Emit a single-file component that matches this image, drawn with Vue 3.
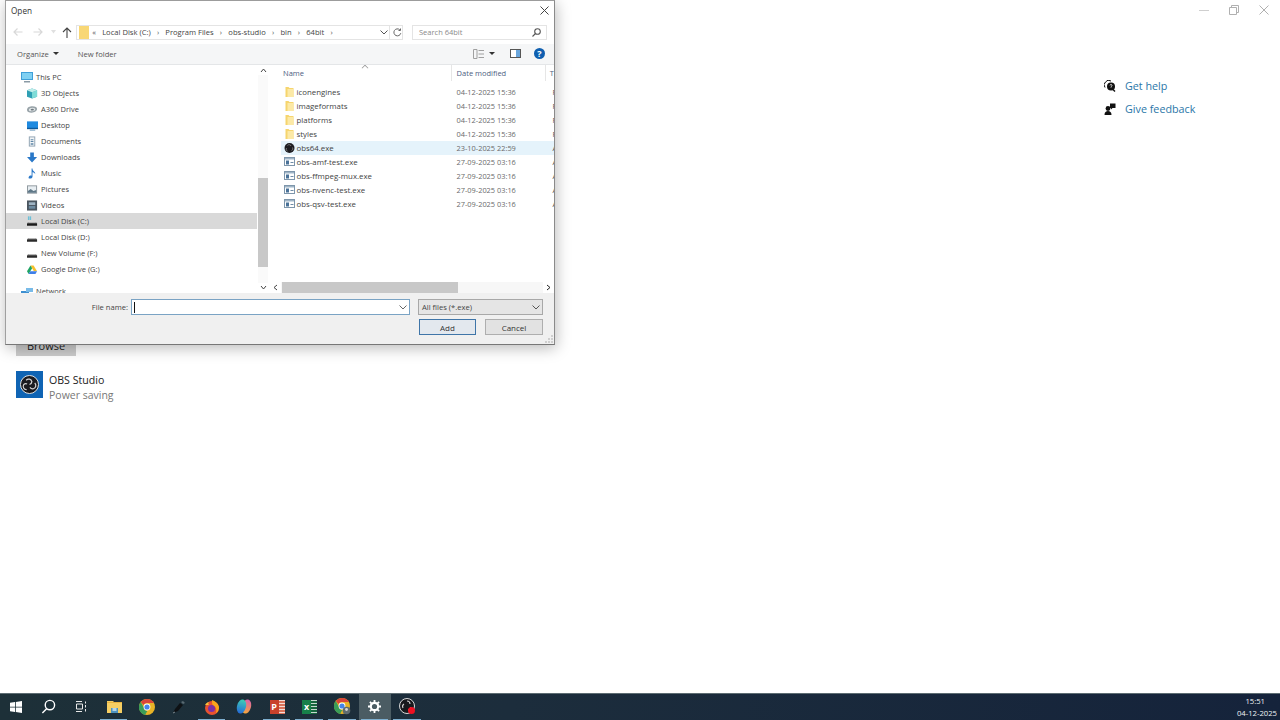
<script setup>
const treeItems = [
  { name: "This PC", icon: "pc", top: true },
  { name: "3D Objects", icon: "cube" },
  { name: "A360 Drive", icon: "drive360" },
  { name: "Desktop", icon: "desktop" },
  { name: "Documents", icon: "docs" },
  { name: "Downloads", icon: "down" },
  { name: "Music", icon: "music" },
  { name: "Pictures", icon: "pics" },
  { name: "Videos", icon: "video" },
  { name: "Local Disk (C:)", icon: "diskc", selected: true },
  { name: "Local Disk (D:)", icon: "disk" },
  { name: "New Volume (F:)", icon: "disk" },
  { name: "Google Drive (G:)", icon: "gdrive" },
  { name: "Network", icon: "network", top: true, gap: true },
];

// each icon is a list of [path, fill] drawn in a 12x11 box
const treeIcons = {
  pc: [["M0 0h12v8H0z", "#3f9fd8"], ["M1 1h10v6H1z", "#7fd0f2"], ["M3 9h6v1.500H3z", "#8a9aa5"]],
  cube: [["M5.500 0L11 2v7l-5.500 2L0 9V2z", "#2f9fb4"], ["M5.500 4L11 2v7l-5.500 2z", "#7fdcd8"], ["M5.500 0L11 2 5.500 4 0 2z", "#bfeeea"]],
  drive360: [["M0 6c0-3 3-4 6-4s5 1 5 3-3 4-6 4-5-1-5-3z", "#98a3a8"], ["M2 6c0-1.500 2-2.300 4-2.300S9 4.500 9 5.500 7 7.500 5 7.500 2 7 2 6z", "#e4e8ea"], ["M4 5.800c0-.6 1-1 2-1s1.500.4 1.500.9S6.500 6.700 5.500 6.700 4 6.300 4 5.800z", "#6e7a80"]],
  desktop: [["M0 1h12v8H0z", "#1f8ae0"], ["M0 8h12v1.500H0z", "#0d5a9c"], ["M3 10h6v1H3z", "#5a8fb8"]],
  docs: [["M2 0h7v11H2z", "#8ca0b0"], ["M3 1h5v9H3z", "#f2f5f7"], ["M4 3h3v1H4zM4 5h3v1H4zM4 7.500h3v1.500H4z", "#5f87a8"]],
  down: [["M3.500 0h4v5H11L5.500 11 0 5h3.500z", "#2a78c8"]],
  music: [["M5 0h1c0 3 3 3 3 6-1-1.500-2-2-3-2v5c0 1.500-1.500 2-3 2S1.500 10 2 9s2-1.500 3-1z", "#2a78c8"]],
  pics: [["M0 1h11v9H0z", "#8a949a"], ["M1 2h9v7H1z", "#e8eef2"], ["M1 7l3-2 3 2 3-1v3H1z", "#5f7888"]],
  video: [["M0 0h11v11H0z", "#4a5560"], ["M2 2h7v3H2z", "#9fb4c4"], ["M2 6h7v3H2z", "#6c8aa0"]],
  disk: [["M1.500 6h8l1.500 2v2H0V8z", "#2a2a2a"], ["M1.500 6h8l.8 1.500H.8z", "#b8b8b8"]],
  diskc: [["M1.500 6h8l1.500 2v2H0V8z", "#1c1c1c"], ["M1.500 6h8l.8 1.500H.8z", "#b8b8b8"], ["M1 0h1.500v1.500H1zM3 0h1.500v1.500H3zM1 2h1.500v1.500H1zM3 2h1.500v1.500H3z", "#4ab8d8"]],
  gdrive: [["M3.800 1h3.400l3.800 6.500H7.500z", "#f6c02c"], ["M3.800 1L0 7.500l1.800 3 3.800-6.500z", "#1fa463"], ["M3.500 7.500H11l-1.800 3H1.800z", "#3f7fe8"]],
  network: [["M0 5h8v5H0z", "#3d8fd0"], ["M5 2h7v4H5z", "#79bbe8"], ["M3 10h3v1H3z", "#707c84"]],
};

const files = [
  { name: "iconengines", date: "04-12-2025 15:36", type: "F", icon: "folder" },
  { name: "imageformats", date: "04-12-2025 15:36", type: "F", icon: "folder" },
  { name: "platforms", date: "04-12-2025 15:36", type: "F", icon: "folder" },
  { name: "styles", date: "04-12-2025 15:36", type: "F", icon: "folder" },
  { name: "obs64.exe", date: "23-10-2025 22:59", type: "A", icon: "obs", hover: true },
  { name: "obs-amf-test.exe", date: "27-09-2025 03:16", type: "A", icon: "exe" },
  { name: "obs-ffmpeg-mux.exe", date: "27-09-2025 03:16", type: "A", icon: "exe" },
  { name: "obs-nvenc-test.exe", date: "27-09-2025 03:16", type: "A", icon: "exe" },
  { name: "obs-qsv-test.exe", date: "27-09-2025 03:16", type: "A", icon: "exe" },
];

const crumbs = ["Local Disk (C:)", "Program Files", "obs-studio", "bin", "64bit"];

const taskIcons = [
  { id: "start" },
  { id: "search" },
  { id: "tasks" },
  { id: "explorer", open: true },
  { id: "chrome" },
  { id: "pen" },
  { id: "firefox", open: true },
  { id: "copilot" },
  { id: "ppt", open: true },
  { id: "excel", open: true },
  { id: "chrome2", open: true },
  { id: "settings", open: true, active: true },
  { id: "obs", open: true },
];
</script>

<template>
  <div class="screen">
    <main class="desktop">
      <section class="settings">
        <div class="settings-left">
          <button class="browse">Browse</button>
          <div class="app-row">
            <div class="app-tile">
              <svg width="19" height="19" viewBox="0 0 20 20">
                <circle cx="10" cy="10" r="9.500" fill="#1b1b1f" stroke="#e8e8e8" stroke-width="1" />
                <g fill="none" stroke="#d4d4d4" stroke-width="1.300">
                  <path d="M6.500 5.500a3.500 3.500 0 0 1 6 1.500 3.500 3.500 0 0 1-2.500 3" />
                  <path d="M15.500 8.500a3.500 3.500 0 0 1-1.500 6 3.500 3.500 0 0 1-3.500-1.500" />
                  <path d="M7 15.500a3.500 3.500 0 0 1-3-5.500 3.500 3.500 0 0 1 3.500-.5" />
                </g>
              </svg>
            </div>
            <div>
              <div class="app-name">OBS Studio</div>
              <div class="app-mode">Power saving</div>
            </div>
          </div>
        </div>
        <div class="settings-right">
          <div class="win-controls">
            <svg width="10" height="10" viewBox="0 0 10 10"><path d="M0 5.500h10" stroke="#cfcfcf" /></svg>
            <svg width="10" height="10" viewBox="0 0 10 10" fill="none" stroke="#b0b0b0"><path d="M.5 2.500h7v7h-7zM2.500 2.500v-2h7v7h-2" /></svg>
            <svg width="10" height="10" viewBox="0 0 10 10"><path d="M.5.500l9 9M9.500.500l-9 9" stroke="#b0b0b0" /></svg>
          </div>
          <ul class="help-links">
            <li>
              <svg width="12" height="12" viewBox="0 0 12 12">
                <path d="M1 7.500A4 4 0 0 1 1.500 2 4 4 0 0 1 7 1" fill="none" stroke="#111" />
                <circle cx="7" cy="6.500" r="4" fill="#111" />
                <path d="M9 9.500l2 2" stroke="#111" stroke-width="1.400" />
                <path d="M6 5.400a1 1 0 1 1 1.400 1L7 7v.6" fill="none" stroke="#fff" stroke-width=".8" />
              </svg>
              <a>Get help</a>
            </li>
            <li>
              <svg width="12" height="12" viewBox="0 0 12 12" fill="#111">
                <circle cx="4" cy="5.500" r="2.400" />
                <path d="M.5 12c0-3 1.500-4 3.500-4s3.500 1 3.500 4zM6 .5h5.500V5H8.500L7 6.500V5H6z" />
              </svg>
              <a>Give feedback</a>
            </li>
          </ul>
        </div>
      </section>

      <div class="dialog">
        <header class="title-bar">
          <span>Open</span>
          <svg width="9" height="9" viewBox="0 0 9 9"><path d="M.5.500l8 8M8.500.500l-8 8" stroke="#444" stroke-width="1" /></svg>
        </header>

        <div class="nav-bar">
          <div class="nav-buttons">
            <svg width="10" height="10" viewBox="0 0 10 10" fill="none" stroke="#d8d8d8" stroke-width="1.200"><path d="M9.500 5H1M4.500 1.500L1 5l3.500 3.500" /></svg>
            <svg width="10" height="10" viewBox="0 0 10 10" fill="none" stroke="#d8d8d8" stroke-width="1.200"><path d="M.5 5H9M5.500 1.500L9 5 5.500 8.500" /></svg>
            <svg width="5" height="4" viewBox="0 0 5 4"><path d="M0 0h5L2.500 3.500z" fill="#e0e0e0" /></svg>
            <svg width="10" height="11" viewBox="0 0 10 11" fill="none" stroke="#444" stroke-width="1.100"><path d="M5 11V1.500M1 5l4-4 4 4" /></svg>
          </div>
          <div class="address">
            <svg class="addr-folder" width="10" height="13" viewBox="0 0 10 13"><path d="M0 0h10v13H0z" fill="#f8d775" /></svg>
            <span class="chev">«</span>
            <template v-for="crumb in crumbs" :key="crumb">
              <span>{{ crumb }}</span>
              <span class="chev">›</span>
            </template>
            <svg class="addr-drop" width="8" height="5" viewBox="0 0 8 5"><path d="M.5.500L4 4 7.500.500" fill="none" stroke="#555" /></svg>
            <span class="addr-refresh">
              <svg width="9" height="9" viewBox="0 0 9 9" fill="none" stroke="#666"><path d="M7.800 5.200A3.500 3.500 0 1 1 6.800 1.800M7.500.5v2h-2" /></svg>
            </span>
          </div>
          <div class="search">
            <span>Search 64bit</span>
            <svg width="9" height="9" viewBox="0 0 9 9" fill="none" stroke="#555" stroke-width="1.100"><circle cx="5.500" cy="3.500" r="2.800" /><path d="M3.500 5.500L.5 8.500" /></svg>
          </div>
        </div>

        <div class="tool-bar">
          <span class="tool-item">Organize <i class="caret"></i></span>
          <span class="tool-item new-folder">New folder</span>
          <div class="tool-right">
            <svg width="12" height="10" viewBox="0 0 12 10" fill="none" stroke="#a0a0a0"><path d="M.5.500h3.500v9H.5zM5.500 1.500H11M5.500 5H11M5.500 8.500H11" /></svg>
            <i class="caret"></i>
            <svg class="pane-icon" width="11" height="9" viewBox="0 0 11 9"><rect x=".5" y=".5" width="10" height="8" fill="#fff" stroke="#555" /><rect x="6" y="1" width="4" height="7" fill="#6aa6dc" /></svg>
            <span class="help-btn">?</span>
          </div>
        </div>

        <div class="browser">
          <nav class="tree">
            <div v-for="item in treeItems" :key="item.name" class="tree-row" :class="{ selected: item.selected, top: item.top, network: item.gap }">
              <svg class="tree-icon" :width="item.top ? 12 : 11" height="11" viewBox="0 0 12 11">
                <path v-for="(p, i) in treeIcons[item.icon]" :key="i" :d="p[0]" :fill="p[1]" />
              </svg>
              <span>{{ item.name }}</span>
            </div>
          </nav>
          <div class="vscroll">
            <svg width="7" height="5" viewBox="0 0 7 5"><path d="M1 4l2.500-3L6 4" fill="none" stroke="#444" /></svg>
            <div class="vtrack"><div class="vthumb"></div></div>
            <svg width="7" height="5" viewBox="0 0 7 5"><path d="M1 1l2.500 3L6 1" fill="none" stroke="#444" /></svg>
          </div>
          <div class="files">
            <div class="file-head">
              <span class="col-name">Name<i class="sort"></i></span>
              <span class="col-date">Date modified</span>
              <span class="col-type">T</span>
            </div>
            <div class="file-list">
              <div v-for="file in files" :key="file.name" class="file-row" :class="{ hover: file.hover }">
                <svg v-if="file.icon === 'folder'" class="file-icon" width="10" height="10" viewBox="0 0 10 10">
                  <path d="M1 0h3l1 1h4v9H1z" fill="#f6d56e" /><path d="M3 2h6v8H3z" fill="#fce9a6" />
                </svg>
                <svg v-else-if="file.icon === 'obs'" class="file-icon" width="10" height="10" viewBox="0 0 10 10">
                  <circle cx="5" cy="5" r="5" fill="#1c1c20" />
                  <path d="M3 2.500a2 2 0 0 1 3.500.5M8 4.500a2 2 0 0 1-1 3M3 8a2 2 0 0 1-1-3" fill="none" stroke="#8a8a8a" stroke-width=".8" />
                </svg>
                <svg v-else class="file-icon" width="11" height="9" viewBox="0 0 11 9">
                  <rect x=".5" y=".5" width="10" height="8" fill="#fff" stroke="#7e96ab" />
                  <path d="M1 1h9v1.500H1z" fill="#9fb4c6" /><path d="M2 3.500h3v4H2z" fill="#4a7298" /><path d="M6.500 5h3v1h-3z" fill="#6f8ca6" />
                </svg>
                <span class="col-file">{{ file.name }}</span>
                <span class="col-when">{{ file.date }}</span>
                <span class="col-kind">{{ file.type }}</span>
              </div>
            </div>
            <div class="hscroll">
              <svg width="5" height="7" viewBox="0 0 5 7"><path d="M4 1L1 3.500 4 6" fill="none" stroke="#444" /></svg>
              <div class="htrack"><div class="hthumb"></div></div>
              <svg width="5" height="7" viewBox="0 0 5 7"><path d="M1 1l3 2.500L1 6" fill="none" stroke="#222" /></svg>
            </div>
          </div>
        </div>

        <footer class="dialog-foot">
          <div class="name-row">
            <label>File name:</label>
            <div class="name-input">
              <i class="cursor"></i>
              <svg width="8" height="5" viewBox="0 0 8 5"><path d="M.5.500L4 4 7.500.500" fill="none" stroke="#666" /></svg>
            </div>
            <div class="type-select">
              <span>All files (*.exe)</span>
              <svg width="8" height="5" viewBox="0 0 8 5"><path d="M.5.500L4 4 7.500.500" fill="none" stroke="#555" /></svg>
            </div>
          </div>
          <div class="btn-row">
            <button class="dlg-btn primary">Add</button>
            <button class="dlg-btn">Cancel</button>
          </div>
          <svg class="grip" width="8" height="8" viewBox="0 0 8 8" fill="#cfcfcf"><path d="M6 0h2v2H6zM3 3h2v2H3zM6 3h2v2H6zM0 6h2v2H0zM3 6h2v2H3zM6 6h2v2H6z" /></svg>
        </footer>
      </div>
    </main>

    <footer class="taskbar">
      <div class="task-icons">
        <div v-for="t in taskIcons" :key="t.id" class="task-btn" :class="{ open: t.open, active: t.active }">
          <svg v-if="t.id === 'start'" width="12" height="12" viewBox="0 0 12 12" fill="#fff"><path d="M0 1.800l5-.8v4.700H0zM5.800.9L12 0v5.700H5.800zM0 6.400h5v4.700l-5-.8zM5.800 6.400H12V12l-6.200-.9z" /></svg>
          <svg v-else-if="t.id === 'search'" width="15" height="15" viewBox="0 0 16 16" fill="none" stroke="#fff" stroke-width="1.500"><circle cx="9.500" cy="6.500" r="5" /><path d="M6 10.500L1.500 15" /></svg>
          <svg v-else-if="t.id === 'tasks'" width="12" height="11" viewBox="0 0 12 11" fill="none" stroke="#e8e8e8"><path d="M1 .5h6M1.500 3h6v5h-6zM1 10.500h6M10.500 .5v2M10.500 4v2.500M10.500 8v2.500" /></svg>
          <svg v-else-if="t.id === 'explorer'" width="15" height="14" viewBox="0 0 15 14"><path d="M0 1h6l1.500 1.500H15V13H0z" fill="#f6cf63" /><path d="M0 2.500h15" stroke="#e8b33f" /><rect x="4" y="8" width="7" height="5" fill="#4d93bf" /><rect x="5.500" y="8" width="4" height="3" fill="#b7d5e4" /></svg>
          <svg v-else-if="t.id === 'chrome'" width="16" height="16" viewBox="0 0 16 16">
            <circle cx="8" cy="8" r="8" fill="#e8b326" />
            <path d="M8 0a8 8 0 0 1 7 4H8a4 4 0 0 0-3.500 2L1.800 3A8 8 0 0 1 8 0z" fill="#d9453a" />
            <path d="M1.800 3l3 5.500a4 4 0 0 0 3.500 3.500L6 16A8 8 0 0 1 1.800 3z" fill="#3a9d58" />
            <circle cx="8" cy="8" r="3.400" fill="#fff" /><circle cx="8" cy="8" r="2.600" fill="#4585e8" />
          </svg>
          <svg v-else-if="t.id === 'pen'" width="14" height="14" viewBox="0 0 14 14"><path d="M1 13l2-4 5-6 3 2-5 6z" fill="#0e1114" /><path d="M9 2l2-1 2 2-2 1z" fill="#596a72" /><path d="M1 13l2-1" stroke="#7f8c92" /></svg>
          <svg v-else-if="t.id === 'firefox'" width="16" height="16" viewBox="0 0 16 16">
            <circle cx="8" cy="9" r="7" fill="#e8522f" />
            <path d="M8 1c3 1 6 3 7 7 0 2-1 5-3 6 1-3 0-6-2-7-2-.5-2-3-2-6z" fill="#f8a51c" />
            <circle cx="7.500" cy="9.500" r="3.500" fill="#7b2fa5" />
            <path d="M1 6c1-2 3-3 4-3-1 1-1 2 0 3z" fill="#f6c23c" />
          </svg>
          <svg v-else-if="t.id === 'copilot'" width="16" height="15" viewBox="0 0 16 15">
            <defs>
              <linearGradient id="copilotLeft" x1="0" y1="0" x2="0" y2="1"><stop offset="0" stop-color="#3fd0b4" /><stop offset="1" stop-color="#2468d8" /></linearGradient>
              <linearGradient id="copilotRight" x1="0" y1="0" x2="0" y2="1"><stop offset="0" stop-color="#d85fb0" /><stop offset="1" stop-color="#f5a83a" /></linearGradient>
            </defs>
            <ellipse cx="10.500" cy="7.500" rx="4.500" ry="7.200" transform="rotate(14 10.500 7.500)" fill="url(#copilotRight)" />
            <ellipse cx="5.500" cy="7.500" rx="4.500" ry="7.200" transform="rotate(14 5.500 7.500)" fill="url(#copilotLeft)" />
          </svg>
          <span v-else-if="t.id === 'ppt'" class="office ppt"><b>P</b><i></i></span>
          <span v-else-if="t.id === 'excel'" class="office xls"><b>x</b><i></i></span>
          <svg v-else-if="t.id === 'chrome2'" width="17" height="17" viewBox="0 0 17 17">
            <circle cx="8" cy="8" r="8" fill="#e8b326" />
            <path d="M8 0a8 8 0 0 1 7 4H8a4 4 0 0 0-3.500 2L1.800 3A8 8 0 0 1 8 0z" fill="#d9453a" />
            <path d="M1.800 3l3 5.500a4 4 0 0 0 3.500 3.500L6 16A8 8 0 0 1 1.800 3z" fill="#3a9d58" />
            <circle cx="8" cy="8" r="3.400" fill="#fff" /><circle cx="8" cy="8" r="2.600" fill="#4585e8" />
            <circle cx="12.500" cy="12.500" r="3.800" fill="#5e6b70" /><circle cx="12.500" cy="11.500" r="1.400" fill="#d8d8d8" />
          </svg>
          <svg v-else-if="t.id === 'settings'" width="13" height="13" viewBox="0 0 13 13"><circle cx="6.500" cy="6.500" r="3.700" fill="none" stroke="#fff" stroke-width="2.200" /><path d="M6.500 0v13M0 6.500h13M1.900 1.900l9.200 9.200M11.100 1.900l-9.200 9.200" stroke="#fff" stroke-width="1.800" stroke-dasharray="2.200 8.600 2.200" /></svg>
          <svg v-else width="17" height="17" viewBox="0 0 17 17">
            <circle cx="8" cy="8" r="7.500" fill="#17181c" stroke="#d8d8d8" />
            <path d="M8 3a3 3 0 0 1 3 3M12 9a3 3 0 0 1-3 3M4 10a3 3 0 0 1 1-4" fill="none" stroke="#ccc" stroke-width="1.100" />
            <circle cx="12.500" cy="12.500" r="3.500" fill="#ee1122" />
          </svg>
        </div>
      </div>
      <div class="clock">
        <span>15:51</span>
        <span>04-12-2025</span>
      </div>
    </footer>
  </div>
</template>

<style>
html,
body {
  margin: 0;
  background: #fff;
}
</style>

<style scoped>
.screen {
  width: 1280px;
  height: 720px;
  display: flex;
  flex-direction: column;
  overflow: hidden;
  font-family: "Open Sans", "Noto Sans", sans-serif;
  color: #222;
}

.desktop {
  flex: 1;
  position: relative;
  background: #fff;
}

/* settings page behind the dialog */
.settings {
  height: 100%;
  display: flex;
  justify-content: space-between;
  box-sizing: border-box;
}

.settings-left {
  padding: 337px 0 0 16px;
}

.browse {
  display: block;
  width: 60px;
  height: 19px;
  border: 0;
  padding: 0 0 2px;
  background: #cccccc;
  color: #222;
  font: 11px "Open Sans", sans-serif;
}

.app-row {
  display: flex;
  gap: 6px;
  margin-top: 15px;
}

.app-tile {
  width: 27px;
  height: 27px;
  background: #0f64b4;
  display: flex;
  align-items: center;
  justify-content: center;
}

.app-name {
  font-size: 10.600px;
  line-height: 15px;
  margin-top: 2px;
  color: #222;
}

.app-mode {
  font-size: 10.500px;
  line-height: 15px;
  color: #787878;
}

.settings-right {
  width: 176px;
}

.win-controls {
  display: flex;
  gap: 20px;
  justify-content: flex-end;
  padding: 5px 11px 0 0;
}

.help-links {
  list-style: none;
  margin: 59px 0 0;
  padding: 0;
}

.help-links li {
  display: flex;
  align-items: center;
  gap: 9px;
  height: 23px;
  font-size: 10.750px;
  color: #2a76a8;
}

.help-links svg {
  flex: none;
}

.dialog {
  position: absolute;
  left: 5px;
  top: 0;
  width: 550px;
  height: 345px;
  display: flex;
  flex-direction: column;
  box-sizing: border-box;
  background: #fff;
  border-top: 1px solid #9c9c9c;
  border-bottom: 1px solid #777;
  border-right: 1px solid #8a8a8a;
  border-left: 1px solid #a0a0a0;
  box-shadow: 1px 3px 14px rgba(0, 0, 0, 0.28);
  font-size: 7.600px;
  color: #3d3d3d;
}

.title-bar {
  height: 20px;
  flex: none;
  display: flex;
  align-items: center;
  justify-content: space-between;
  padding: 0 5px 2px 5px;
  box-sizing: border-box;
  font-size: 8.200px;
  color: #333;
}

.nav-bar {
  height: 23px;
  flex: none;
  display: flex;
  align-items: center;
  padding-bottom: 1px;
  box-sizing: border-box;
}

.nav-buttons {
  width: 70px;
  flex: none;
  display: flex;
  align-items: center;
  padding-left: 7px;
  box-sizing: border-box;
}

.nav-buttons svg:nth-child(1) {
  margin-right: 10px;
}

.nav-buttons svg:nth-child(2) {
  margin-right: 8px;
}

.nav-buttons svg:nth-child(3) {
  margin-right: 6px;
}

.address {
  width: 327px;
  height: 15px;
  flex: none;
  display: flex;
  align-items: center;
  gap: 6.200px;
  border: 1px solid #e4e4e4;
  box-sizing: border-box;
  color: #444;
}

.addr-folder {
  margin-left: 2px;
  margin-right: -3px;
}

.chev {
  color: #555;
}

.addr-drop {
  margin-left: auto;
  margin-right: -5px;
}

.addr-refresh {
  width: 13px;
  height: 13px;
  display: flex;
  align-items: center;
  justify-content: center;
  padding-left: 2px;
  box-sizing: border-box;
  border-left: 1px solid #e4e4e4;
}

.search {
  width: 135px;
  height: 15px;
  margin-left: 9px;
  flex: none;
  display: flex;
  align-items: center;
  justify-content: space-between;
  padding: 0 5px 0 6px;
  border: 1px solid #e4e4e4;
  box-sizing: border-box;
  color: #8a8a8a;
  font-size: 7.500px;
}

.tool-bar {
  height: 21px;
  flex: none;
  display: flex;
  align-items: center;
  background: #f5f6f7;
  border-bottom: 1px solid #e4e6e8;
  box-sizing: border-box;
  padding: 0 0 1px 11px;
  color: #555;
}

.tool-item {
  display: flex;
  align-items: center;
  gap: 4px;
}

.new-folder {
  margin-left: 19px;
}

.caret {
  width: 0;
  height: 0;
  border: 3px solid transparent;
  border-top: 3px solid #333;
  border-bottom: 0;
  display: inline-block;
}

.tool-right {
  margin-left: auto;
  display: flex;
  align-items: center;
  padding-right: 9px;
}

.tool-right .caret {
  margin-left: 4px;
}

.pane-icon {
  margin-left: 15px;
}

.help-btn {
  width: 11px;
  height: 11px;
  margin-left: 13px;
  border-radius: 50%;
  background: #0f5fb0;
  color: #fff;
  font-size: 9px;
  font-weight: 700;
  line-height: 11px;
  text-align: center;
}

.browser {
  height: 228px;
  flex: none;
  display: flex;
}

.tree {
  width: 252px;
  flex: none;
  overflow: hidden;
  padding-top: 4px;
  box-sizing: border-box;
}

.tree-row {
  height: 16px;
  display: flex;
  align-items: center;
  gap: 3px;
  padding-left: 21px;
  margin-right: 1px;
  color: #444;
  font-size: 7.500px;
}

.tree-row.top {
  padding-left: 15px;
}

.tree-row.selected {
  background: #d9d9d9;
}

.tree-row.network {
  margin-top: 6px;
}

.tree-icon {
  flex: none;
  display: block;
}

.vscroll {
  width: 10px;
  margin-right: 2px;
  flex: none;
  display: flex;
  flex-direction: column;
  align-items: center;
  justify-content: space-between;
  padding: 3px 0 3px;
  box-sizing: border-box;
}

.vtrack {
  flex: 1;
  width: 100%;
  margin: 2px 0;
  position: relative;
  background: #fafafa;
}

.vthumb {
  position: absolute;
  left: 0;
  right: 0;
  top: 103px;
  height: 89px;
  background: #c8c8c8;
}

.files {
  flex: 1;
  min-width: 0;
  display: flex;
  flex-direction: column;
  overflow: hidden;
}

.file-head {
  height: 19px;
  flex: none;
  display: flex;
  align-items: center;
  color: #4d6082;
  font-size: 7.500px;
  padding-bottom: 3px;
  box-sizing: border-box;
  position: relative;
}

.col-name {
  width: 183px;
  padding-left: 13px;
  box-sizing: border-box;
  border-right: 1px solid #e6e6e6;
  height: 100%;
  display: flex;
  align-items: center;
}

.sort {
  position: absolute;
  left: 92px;
  top: 0;
  width: 5px;
  height: 5px;
  border-left: 1px solid #999;
  border-top: 1px solid #999;
  transform: rotate(45deg) scale(.8);
}

.col-date {
  width: 95px;
  padding-left: 5px;
  box-sizing: border-box;
  border-right: 1px solid #e6e6e6;
  height: 100%;
  display: flex;
  align-items: center;
}

.col-type {
  padding-left: 4px;
}

.file-list {
  flex: 1;
  padding: .5px 0 0 11px;
}

.file-row {
  height: 14px;
  display: flex;
  align-items: center;
  white-space: nowrap;
  color: #444;
  font-size: 7.850px;
}

.file-row.hover {
  background: #e5f3fb;
}

.file-icon {
  width: 11px;
  margin-left: 3px;
  flex: none;
  display: block;
}

.col-file {
  width: 160px;
  margin-left: 1.500px;
  flex: none;
}

.col-when {
  width: 96px;
  flex: none;
  color: #6a6a6a;
  font-size: 7.400px;
}

.col-kind {
  color: #555;
  font-size: 7.400px;
}

.hscroll {
  height: 11px;
  flex: none;
  display: flex;
  align-items: center;
  gap: 3px;
  padding: 0 3px;
  box-sizing: border-box;
}

.htrack {
  flex: 1;
  height: 100%;
  background: #f7f7f7;
}

.hthumb {
  width: 176px;
  height: 100%;
  margin-left: 1px;
  background: #c8c8c8;
}

.dialog-foot {
  flex: 1;
  position: relative;
  background: #f0f0f0;
  padding: 6px 11px 0 0;
}

.name-row {
  height: 16px;
  display: flex;
  align-items: center;
}

.name-row label {
  width: 122px;
  flex: none;
  text-align: right;
  color: #444;
}

.name-input {
  width: 279px;
  height: 16px;
  margin-left: 3px;
  flex: none;
  display: flex;
  align-items: center;
  justify-content: space-between;
  box-sizing: border-box;
  padding: 0 2px;
  background: #fff;
  border: 1px solid #7aa3c4;
}

.cursor {
  width: 1px;
  height: 11px;
  background: #111;
}

.type-select {
  width: 125px;
  height: 16px;
  margin-left: 8px;
  flex: none;
  display: flex;
  align-items: center;
  justify-content: space-between;
  box-sizing: border-box;
  padding: 0 2px 0 3px;
  background: #e5e5e5;
  border: 1px solid #a8a8a8;
  color: #444;
}

.btn-row {
  display: flex;
  justify-content: flex-end;
  gap: 9px;
  margin-top: 4px;
}

.dlg-btn {
  width: 58px;
  height: 16px;
  padding: 0;
  box-sizing: border-box;
  background: #e2e2e2;
  border: 1px solid #aeaeae;
  color: #333;
  font: 8px "Open Sans", sans-serif;
}

.dlg-btn.primary {
  width: 57px;
  background: #e3e8ee;
  border: 1.500px solid #3f75a8;
}

.grip {
  position: absolute;
  right: 1px;
  bottom: 1px;
}

/* taskbar */
.taskbar {
  height: 27px;
  flex: none;
  display: flex;
  justify-content: space-between;
  background: linear-gradient(90deg, #1d3038 0%, #1c2d3c 40%, #15233b 100%);
  border-top: 1px solid #5d6c72;
  box-sizing: border-box;
}

.task-icons {
  display: flex;
}

.task-btn {
  width: 32.600px;
  height: 100%;
  display: flex;
  align-items: center;
  justify-content: center;
  position: relative;
  padding-bottom: 1px;
  box-sizing: border-box;
}

.task-btn.open::after {
  content: "";
  position: absolute;
  left: 2px;
  right: 3px;
  bottom: 0;
  height: 1px;
  background: #7fb0d0;
}

.task-btn.active {
  background: #4b5c63;
}

.office {
  width: 15px;
  height: 14px;
  display: flex;
  align-items: stretch;
  font-size: 9px;
  line-height: 14px;
  text-align: center;
}

.office b {
  width: 9px;
  font-weight: 700;
  color: #fff;
}

.office i {
  flex: 1;
  background: repeating-linear-gradient(rgba(255, 255, 255, 0.75) 0 1px, transparent 1px 3px);
}

.ppt b {
  background: #c8412b;
}

.ppt i {
  background-color: #d9725a;
}

.xls b {
  background: #17804a;
}

.xls i {
  background-color: #17663e;
}

.clock {
  display: flex;
  flex-direction: column;
  align-items: flex-end;
  justify-content: center;
  padding: 0 3px 0 0;
  font-size: 7.700px;
  line-height: 12px;
  color: #eef2f5;
}

.clock span:first-child {
  margin-right: 12px;
}
</style>
